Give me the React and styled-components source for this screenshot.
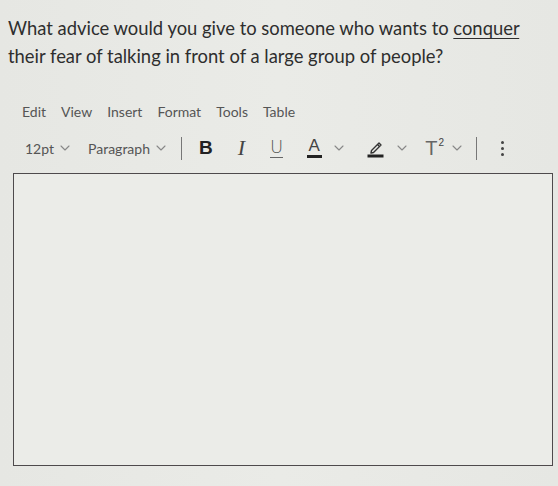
import React from 'react';
import styled, { createGlobalStyle } from 'styled-components';

const Global = createGlobalStyle`
  html, body {
    margin: 0;
    padding: 0;
    background: #e8e9e5;
  }
  body {
    font-family: Lato, "Open Sans", sans-serif;
    color: #333;
  }
`;

const Page = styled.div`
  width: 558px;
  height: 486px;
  padding: 14px 8px 0;
  box-sizing: border-box;
  overflow: hidden;
  background: linear-gradient(90deg, #e6e7e3 0%, #eaebe7 50%, #e6e7e3 100%);
`;

const Question = styled.p`
  margin: 0;
  font-size: 18.4px;
  line-height: 28px;
  color: #2e2e2e;
  width: 540px;

  u {
    text-decoration: underline;
    text-underline-offset: 3px;
  }
`;

const MenuBar = styled.nav`
  display: flex;
  gap: 15px;
  margin: 32px 0 0 14px;
  font-size: 14px;
  line-height: 20px;
  color: #555;
`;

const MenuItem = styled.span``;

const Toolbar = styled.div`
  display: flex;
  align-items: center;
  height: 36px;
  margin: 8px 0 0 17px;
  color: #444;
`;

const Select = styled.div`
  display: flex;
  align-items: center;
  gap: 6px;
  font-size: 14px;
  color: #555;
  margin-right: ${p => p.$mr || 0}px;
`;

const Separator = styled.div`
  width: 1px;
  height: 23px;
  background: #777;
  margin-right: ${p => p.$right || 18}px;
`;

const Btn = styled.div`
  display: flex;
  align-items: center;
  gap: ${p => p.$gap || 0}px;
  margin-right: ${p => p.$mr || 0}px;
  color: #333;
`;

const Bold = styled.span`
  font-family: "Liberation Sans", Arial, sans-serif;
  font-weight: 700;
  font-size: 19px;
  color: #222;
`;

const Italic = styled.span`
  font-family: "Liberation Serif", serif;
  font-style: italic;
  font-size: 22px;
  color: #444;
  padding-right: 3px;
`;

const Under = styled.span`
  font-family: "DejaVu Sans", sans-serif;
  font-weight: 200;
  font-size: 18px;
  color: #555;
  padding-bottom: 3px;
  border-bottom: 1.5px solid #666;
  line-height: 15px;
`;

const LetterA = styled.span`
  font-family: "Liberation Sans", Arial, sans-serif;
  font-size: 17px;
  line-height: 15px;
  color: #444;
  display: flex;
  flex-direction: column;
  align-items: center;
  width: 14px;

  &::after {
    content: '';
    display: block;
    width: 15px;
    height: 3px;
    margin-top: 2px;
    background: #222;
  }
`;

const Sup = styled.span`
  font-family: "Liberation Sans", Arial, sans-serif;
  font-size: 20px;
  color: #666;

  sup {
    font-size: 10px;
    vertical-align: 9px;
    margin-left: 1px;
    color: #444;
  }
`;

const Chevron = () => (
  <svg width="10" height="6" viewBox="0 0 10 6" fill="none">
    <path d="M1 1l4 4 4-4" stroke="#888" strokeWidth="1.1" strokeLinecap="round" strokeLinejoin="round" />
  </svg>
);

const Pen = () => (
  <svg width="17" height="20" viewBox="0 0 17 20" fill="none">
    <path d="M4.5 12.5 L12 5 L14 7 L6.5 14.5 L4 15 Z" stroke="#333" strokeWidth="1.4" strokeLinejoin="round" />
    <path d="M10.5 6.5 L12.5 8.5" stroke="#333" strokeWidth="1.2" />
    <rect x="0.5" y="16.5" width="16" height="3" fill="#222" />
  </svg>
);

const Dots = styled.div`
  display: flex;
  flex-direction: column;
  gap: 3px;

  span {
    width: 3px;
    height: 3px;
    border-radius: 50%;
    background: #444;
  }
`;

const Editor = styled.div`
  margin: 7px 0 0 5px;
  width: 540px;
  height: 293px;
  box-sizing: border-box;
  border: 1.5px solid #4e4a4c;
  background: #ebece8;
`;

export default function App() {
  return (
    <>
      <Global />
      <Page>
        <Question>
          What advice would you give to someone who wants to <u>conquer</u> their fear of talking in front of a large group of people?
        </Question>
        <MenuBar>
          {['Edit', 'View', 'Insert', 'Format', 'Tools', 'Table'].map(m => (
            <MenuItem key={m}>{m}</MenuItem>
          ))}
        </MenuBar>
        <Toolbar>
          <Select $mr={18}>12pt <Chevron /></Select>
          <Select $mr={15}>Paragraph <Chevron /></Select>
          <Separator $right={17} />
          <Btn $mr={25}><Bold>B</Bold></Btn>
          <Btn $mr={22}><Italic>I</Italic></Btn>
          <Btn $mr={24}><Under>U</Under></Btn>
          <Btn $mr={23} $gap={13}><LetterA>A</LetterA><Chevron /></Btn>
          <Btn $mr={18} $gap={13}><Pen /><Chevron /></Btn>
          <Btn $mr={14} $gap={8}><Sup>T<sup>2</sup></Sup><Chevron /></Btn>
          <Separator $right={24} />
          <Dots><span /><span /><span /></Dots>
        </Toolbar>
        <Editor />
      </Page>
    </>
  );
}
